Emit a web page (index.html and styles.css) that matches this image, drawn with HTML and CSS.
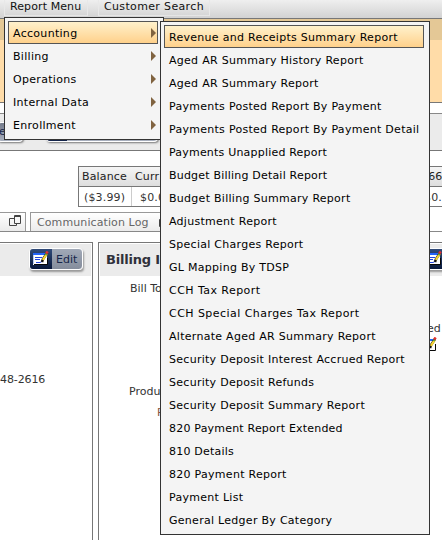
FILE: index.html
```html
<!DOCTYPE html>
<html lang="en">
<head>
<meta charset="utf-8">
<title>Customer Billing</title>
<link rel="stylesheet" href="styles.css">
</head>
<body>
<svg width="0" height="0" class="defs">
  <symbol id="edit" viewBox="0 0 16 14">
    <path d="M0 2h14v12H0z" fill="#fff"/><path d="M0 2h12v2H0z" fill="#2463f8"/><path d="M0 4h1v9H0z" fill="#b8ccf2"/>
    <path d="M2 6.500h7M2 8.500h5M3 11.500h4l2-1" stroke="#2347df" fill="none"/>
    <path d="M1 13.500h13.500V7" stroke="#080808" fill="none"/>
    <path d="M9 11l1-3 4-6" stroke="#111" stroke-width="2.500" fill="none"/><path d="M9.800 8.800l4-6" stroke="#f6d434" stroke-width="2.200"/><path d="M13.200 2.500L14.700.5" stroke="#e13131" stroke-width="2.500"/><path d="M12.300 3l1.400 1" stroke="#429b3b" stroke-width="1.500"/>
  </symbol>
</svg>
<nav class="menubar"><span class="top-item report">Report Menu</span><span class="top-item search">Customer Search</span></nav>
<div class="band-dark"></div>
<div class="band-light"></div>
<div class="band-white"></div>
<div class="toolbar"><span class="tool-button first">e</span><span class="tool-button second"><i></i></span></div>
<main>
  <section class="summary">
    <div class="row head"><span class="balance">Balance</span><span class="current">Curr</span><span class="phone">366</span></div>
    <div class="row values"><span class="balance">($3.99)</span><span class="current">$0.0</span><span class="phone">$0.</span></div>
  </section>
  <div class="tabs">
    <div class="tab small"><svg width="12" height="12" viewBox="0 0 12 12" fill="none" stroke="#444"><path d="M5.500.5h6v8h-6zM5 3.500H.5v7h7V9M5 1.500h6"/></svg></div>
    <div class="tab log">Communication Log <svg width="12" height="12" viewBox="0 0 12 12" fill="none" stroke="#444"><path d="M5.500.5h6v8h-6zM5 3.500H.5v7h7V9M5 1.500h6"/></svg></div>
  </div>
  <div class="panels">
    <section class="panel contact">
      <header><span class="edit"><b><svg width="16" height="14"><use href="#edit"/></svg></b><span>Edit</span></span></header>
      <p class="number">48-2616</p>
    </section>
    <section class="panel billing">
      <header><h2>Billing I</h2><span class="edit"><b><svg width="16" height="14"><use href="#edit"/></svg></b></span></header>
      <div class="field bill-to">Bill To</div>
      <div class="field detailed">ed</div>
      <div class="field mini"><svg width="16" height="14"><use href="#edit"/></svg></div>
      <div class="field product">Produ</div>
      <div class="field rate">P</div>
    </section>
  </div>
</main>
<ul class="menu main-menu">
  <li class="active">Accounting</li><li>Billing</li><li>Operations</li><li>Internal Data</li><li>Enrollment</li>
</ul>
<ul class="menu sub-menu">
  <li class="active">Revenue and Receipts Summary Report</li>
  <li>Aged AR Summary History Report</li>
  <li>Aged AR Summary Report</li>
  <li>Payments Posted Report By Payment</li>
  <li>Payments Posted Report By Payment Detail</li>
  <li class="tight">Payments Unapplied Report</li>
  <li class="tight">Budget Billing Detail Report</li>
  <li>Budget Billing Summary Report</li>
  <li>Adjustment Report</li>
  <li>Special Charges Report</li>
  <li>GL Mapping By TDSP</li>
  <li class="loose">CCH Tax Report</li>
  <li class="loose">CCH Special Charges Tax Report</li>
  <li>Alternate Aged AR Summary Report</li>
  <li>Security Deposit Interest Accrued Report</li>
  <li>Security Deposit Refunds</li>
  <li>Security Deposit Summary Report</li>
  <li class="tight">820 Payment Report Extended</li>
  <li class="tight">810 Details</li>
  <li>820 Payment Report</li>
  <li>Payment List</li>
  <li>General Ledger By Category</li>
</ul>
</body>
</html>
```
FILE: styles.css
```css
* { box-sizing: border-box; }
body { margin: 0; width: 442px; height: 540px; overflow: hidden; position: relative; background: #fff; font: 11px/14px Verdana, "DejaVu Sans", sans-serif; color: #333; white-space: nowrap; }
.defs { position: absolute; }
.menubar { height: 19px; display: flex; background: linear-gradient(#efefef, #d2d2d2); border-bottom: 1px solid #777; color: #111; }
.top-item { height: 16px; border-right: 1px solid #e8e8e8; border-bottom: 1px solid #e5e5e5; }
.report { width: 84px; margin-left: 4px; padding-left: 5px; border-left: 1px solid #e8e8e8; letter-spacing: .1px; }
.search { width: 112px; margin-left: 10px; padding-left: 5px; border-left: 1px solid #e8e8e8; letter-spacing: .35px; }
.band-dark { height: 21px; background: #e4c896; }
.band-light { height: 62px; background: #ffdca8; }
.band-white { height: 12px; border-top: 1px solid #777; border-bottom: 1px solid #888; }
.toolbar { height: 37px; padding-top: 8px; display: flex; background: #ebebeb; border-bottom: 1px solid #777; }
.tool-button { height: 20px; background: linear-gradient(#747b8b, #a9b0be); border: 1px solid #fff; border-radius: 4px; box-shadow: 1px 1px 2px #777; color: #17264a; }
.first { width: 26px; margin-left: -3px; padding: 2px 1px; }
.second { width: 112px; margin-left: 23px; overflow: hidden; }
.second i { display: block; width: 20px; height: 20px; background: #14244a; }
.summary { width: 400px; height: 41px; margin: 15px 0 0 78px; border: 1px solid #777; }
.row { display: flex; height: 19px; }
.row span { padding: 3px 0 0 3px; letter-spacing: .15px; flex: none; }
.head { height: 20px; border-bottom: 1px solid #777; background: linear-gradient(#f5f5f5, #dedede); color: #222; }
.row .balance { width: 53px; }
.row .current { width: 283px; }
.row.values span { padding-top: 4px; }
.row.values .balance { padding-left: 5px; border-right: 1px solid #ccc; }
.row.values .current { padding-left: 8px; }
.row .phone { padding-left: 6px; }
.row.values .phone { padding-left: 9px; }
.tabs { height: 20px; margin-top: 5px; display: flex; gap: 4px; border-bottom: 1px solid #888; }
.tab { height: 19px; border: 1px solid #999; border-bottom: 0; background: linear-gradient(#fff, #ebebeb); color: #666; }
.small { width: 26px; border-left: 0; padding: 2px 0 0 9px; }
.log { width: 220px; padding: 3px 0 0 6px; display: flex; gap: 10px; letter-spacing: .1px; }
.log svg { flex: none; }
.panels { display: flex; gap: 5px; height: 302px; margin-top: 10px; }
.panel { border: 1px solid #777; padding: 1px; flex: none; }
.panel header { height: 32px; display: flex; justify-content: space-between; align-items: flex-start; background: #ebebeb; }
.contact { width: 93px; border-left: 0; padding-left: 0; }
.contact header { padding: 4px 8px 0 29px; }
.billing { width: 384px; }
.billing header { padding: 4px 0 0 6px; }
.billing h2 { margin: 3px 0 0; font-size: 13px; line-height: 17px; letter-spacing: -.2px; color: #30313b; }
.billing .edit { margin-right: 4px; }
.edit { display: flex; width: 54px; height: 22px; border: 1px solid #fff; border-radius: 4px; box-shadow: 1px 2px 2px #999; overflow: hidden; background: linear-gradient(#a1a9b7, #858d9c); color: #17264a; flex: none; }
.edit b { width: 22px; height: 20px; padding: 2px 3px; background: linear-gradient(#314b79, #08183b); line-height: 0; }
.edit > span { padding: 4px 0 0 4px; }
.number { margin: 97px 0 0; padding-left: 0; letter-spacing: -.1px; }
.field { height: 14px; }
.bill-to { margin: 6px 0 0 30px; }
.detailed { margin: 26px 0 0 327px; }
.mini { margin: 1px 0 0 321px; }
.product { margin: 34px 0 0 29px; }
.rate { margin: 7px 0 0 57px; color: #855540; }
.menu { position: absolute; list-style: none; margin: 0; padding: 3px; border: 1px solid #333; background: #f4f4f4; color: #000; letter-spacing: .3px; }
.menu li { height: 23px; line-height: 23px; border: 1px solid transparent; padding-left: 4px; }
.menu .active { border-color: #555; background: linear-gradient(#fff1cc, #ffd18b); }
.menu .tight { letter-spacing: .2px; }
.menu .loose { letter-spacing: .45px; }
.main-menu { left: 4px; top: 17px; width: 160px; height: 123px; }
.main-menu li { width: 150px; display: flex; justify-content: space-between; align-items: flex-start; padding-right: 1px; }
.main-menu li::after { content: ""; margin-top: 6px; border-left: 5px solid #806340; border-top: 5px solid transparent; border-bottom: 5px solid transparent; }
.sub-menu { left: 160px; top: 21px; width: 270px; height: 514px; letter-spacing: .28px; }
.sub-menu li { width: 260px; }
```
